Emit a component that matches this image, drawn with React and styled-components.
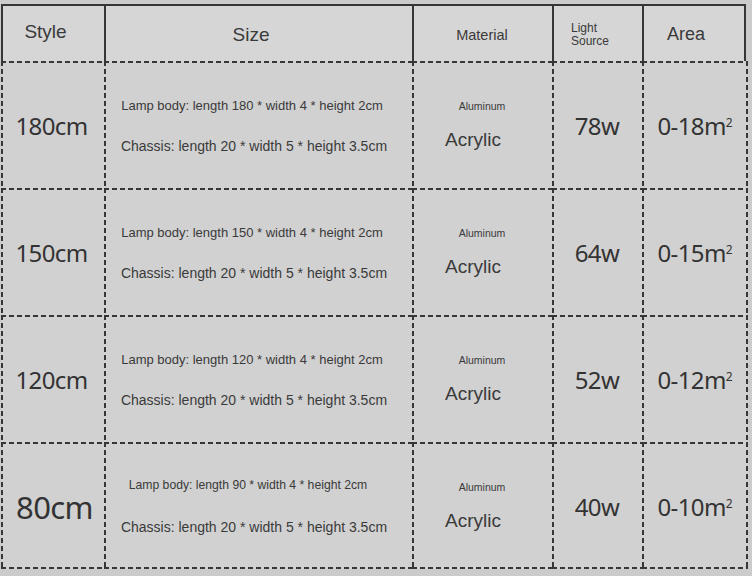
import React from 'react';
import styled, { createGlobalStyle, css } from 'styled-components';

const GlobalStyle = createGlobalStyle`
    html, body {
        margin: 0;
        padding: 0;
        background: #cbcbcb;
    }
    body {
        font-family: "Liberation Sans", Arial, sans-serif;
        color: #3a3a3a;
    }
`;

const rows = [
    { style: '180cm', styleSize: 24, lamp: 'Lamp body: length 180 * width 4 * height 2cm', lampSize: 13, power: '78w', area: '0-18' },
    { style: '150cm', styleSize: 24, lamp: 'Lamp body: length 150 * width 4 * height 2cm', lampSize: 13, power: '64w', area: '0-15' },
    { style: '120cm', styleSize: 24, lamp: 'Lamp body: length 120 * width 4 * height 2cm', lampSize: 13, power: '52w', area: '0-12' },
    { style: '80cm', styleSize: 31, lamp: 'Lamp body: length 90 * width 4 * height 2cm', lampSize: 12.2, power: '40w', area: '0-10' },
];

function App() {
    return (
        <>
            <GlobalStyle />
            <Page>
                <Table>
                    <HeadCell>
                        <StyleHead>Style</StyleHead>
                    </HeadCell>
                    <HeadCell>
                        <SizeHead>Size</SizeHead>
                    </HeadCell>
                    <HeadCell>
                        <MaterialHead>Material</MaterialHead>
                    </HeadCell>
                    <HeadCell>
                        <LightHead>Light<br />Source</LightHead>
                    </HeadCell>
                    <HeadCell $last>
                        <AreaHead>Area</AreaHead>
                    </HeadCell>

                    {rows.map((row, i) => {
                        const bottom = i === rows.length - 1;
                        const small = row.lampSize < 13;
                        return (
                            <React.Fragment key={row.style}>
                                <BodyCell $bottom={bottom}>
                                    <BigValue $size={row.styleSize} $shift={small ? 4 : -2}>{row.style}</BigValue>
                                </BodyCell>
                                <BodyCell $bottom={bottom}>
                                    <SizeStack>
                                        <LampLine $size={row.lampSize} $small={small}>{row.lamp}</LampLine>
                                        <ChassisLine>Chassis: length 20 * width 5 * height 3.5cm</ChassisLine>
                                    </SizeStack>
                                </BodyCell>
                                <BodyCell $bottom={bottom}>
                                    <MaterialStack>
                                        <Aluminum>Aluminum</Aluminum>
                                        <Acrylic>Acrylic</Acrylic>
                                    </MaterialStack>
                                </BodyCell>
                                <BodyCell $bottom={bottom}>
                                    <BigValue $size={24}>{row.power}</BigValue>
                                </BodyCell>
                                <BodyCell $bottom={bottom} $last>
                                    <BigValue $size={24}>
                                        {row.area}m<Sup>2</Sup>
                                    </BigValue>
                                </BodyCell>
                            </React.Fragment>
                        );
                    })}
                </Table>
            </Page>
        </>
    );
}

const Page = styled.div`
    width: 752px;
    height: 576px;
    padding: 4px 0 0 1px;
    box-sizing: border-box;
    overflow: hidden;
`;

const Table = styled.div`
    display: grid;
    grid-template-columns: 103px 308px 140px 90px 106px;
    grid-template-rows: 57px repeat(4, 127px);
`;

const LINE = '#363636';

const dashX = `repeating-linear-gradient(90deg, ${LINE} 0 5px, transparent 5px 8px)`;
const dashY = `repeating-linear-gradient(180deg, ${LINE} 0 5px, transparent 5px 8px)`;

const HeadCell = styled.div`
    display: flex;
    align-items: center;
    justify-content: center;
    background: #d6d6d6;
    border-top: 2px solid ${LINE};
    border-left: 2px solid ${LINE};
    ${p => p.$last && css`
        border-right: 2px solid ${LINE};
        margin-right: 2px;
    `}
`;

const BodyCell = styled.div`
    display: flex;
    align-items: center;
    justify-content: center;
    background:
        ${dashX} left top / 100% 2px no-repeat,
        ${dashY} left top / 2px 100% no-repeat,
        ${p => p.$last ? `${dashY} right top / 2px 100% no-repeat,` : ''}
        ${p => p.$bottom ? `${dashX} left bottom / 100% 2px no-repeat,` : ''}
        #d1d1d1;
`;

const StyleHead = styled.span`
    font-size: 19px;
    margin: 0 16px 4px 0;
`;

const SizeHead = styled.span`
    font-size: 19px;
    margin: 2px 16px 0 0;
`;

const MaterialHead = styled.span`
    font-size: 14.5px;
    margin: 2px 2px 0 0;
`;

const LightHead = styled.span`
    font-size: 12px;
    line-height: 13px;
    align-self: flex-start;
    margin: 16px 0 0 0;
    width: 54px;
`;

const AreaHead = styled.span`
    font-size: 18px;
    margin: 2px 16px 0 0;
`;

const BigValue = styled.span`
    font-family: "Noto Sans", "Open Sans", sans-serif;
    font-size: ${p => p.$size}px;
    letter-spacing: -0.6px;
    color: #333;
    margin-left: ${p => p.$shift || 0}px;
    margin-top: 2px;
    white-space: nowrap;
`;

const Sup = styled.sup`
    font-size: 0.5em;
    vertical-align: 0.7em;
    line-height: 0;
    letter-spacing: 0;
`;

const SizeStack = styled.div`
    display: flex;
    flex-direction: column;
    align-items: center;
    gap: 25px;
    margin: 2px 8px 0 0;
`;

const LampLine = styled.span`
    font-size: ${p => p.$size}px;
    margin-right: ${p => p.$small ? '12px' : '4px'};
    margin-bottom: ${p => p.$small ? '2px' : '0'};
`;

const ChassisLine = styled.span`
    font-size: 14px;
`;

const MaterialStack = styled.div`
    display: flex;
    flex-direction: column;
    align-items: center;
    gap: 17px;
    margin-top: 2px;
`;

const Aluminum = styled.span`
    font-size: 10.5px;
`;

const Acrylic = styled.span`
    font-size: 19px;
    margin-right: 18px;
`;

export default App;
